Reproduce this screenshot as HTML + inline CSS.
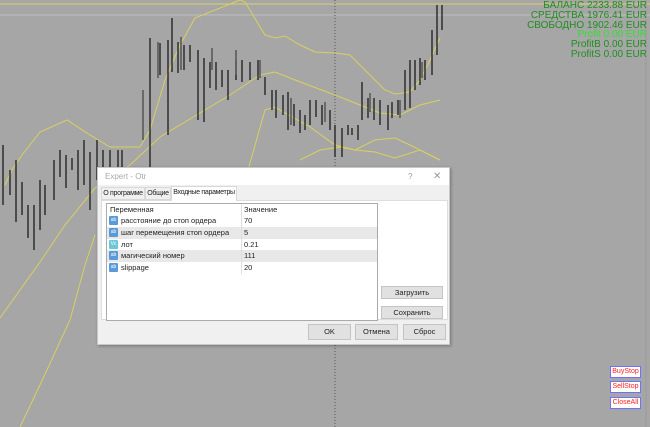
<!DOCTYPE html>
<html><head><meta charset="utf-8"><style>
*{margin:0;padding:0;box-sizing:border-box}
body{width:650px;height:427px;overflow:hidden;background:#a6a6a6;font-family:"Liberation Sans","DejaVu Sans",sans-serif;position:relative}
.info{position:absolute;right:3px;font-size:10px;line-height:10px;color:#1f8f1f;text-align:right;white-space:nowrap}
.btn{position:absolute;left:610px;width:31px;height:12px;background:#fff;border:1px solid #7070ff;color:#ff2020;font-size:7px;line-height:10px;text-align:center}
.dlg{position:absolute;left:97px;top:167px;width:353px;height:178px;background:#f0f0f0;border:1px solid #c8c8c8;box-shadow:1px 1px 3px rgba(0,0,0,.3);font-size:7.5px;color:#222}
.tb{position:absolute;left:0;top:0;width:100%;height:17px;background:#fff;color:#aaa;font-size:8px;line-height:17px;padding-left:7px}
.tab{position:absolute;top:19px;height:13px;line-height:12px;font-size:7px;letter-spacing:-0.3px;text-align:center;white-space:nowrap;overflow:hidden;border:1px solid #d8d8d8;background:#f0f0f0}
.page{position:absolute;left:3px;top:32px;width:347px;height:120px;background:#fff;border:1px solid #ddd}
.tbl{position:absolute;left:8px;top:35px;width:272px;height:118px;border:1px solid #aaa;background:#fff}
.row{position:absolute;left:0;width:270px;height:12px;line-height:12px;white-space:nowrap}
.row span{position:absolute}
.ic{position:absolute;left:2px;top:1px;width:9px;height:9px;background:#5a9ad8;border-radius:1px;font-size:5px;color:#fff;line-height:9px;text-align:center}
.b{position:absolute;height:13px;background:#e1e1e1;border:1px solid #c4c4c4;font-size:7.5px;line-height:11px;text-align:center;color:#222}
</style></head><body>
<svg width="650" height="427" style="position:absolute;left:0;top:0">
<line x1="0" y1="4" x2="650" y2="4" stroke="#d8d070" stroke-width="1"/>
<line x1="0" y1="15" x2="650" y2="15" stroke="#bdbdbd" stroke-width="1"/>
<line x1="335" y1="0" x2="335" y2="427" stroke="#555" stroke-width="1" stroke-dasharray="1,2"/>
<line x1="646" y1="0" x2="646" y2="427" stroke="#999" stroke-width="1"/>
<g fill="none" stroke="#d8d060" stroke-width="1">
<polyline points="5,185 12,170 22,155 40,132 67,120 90,135 110,147 140,147 150,130 165,80 180,45 195,18 240,0 245,2 265,35 275,38 285,36 300,45 315,52 335,53 350,55 365,70 385,90 395,94 410,92 420,80 430,60 440,38"/>
<polyline points="0,318 20,290 40,262 65,225 95,188 130,165 160,137 185,122 205,110 230,95 260,75 275,72 295,80 335,95 360,105 380,113 400,115 420,105 440,100"/>
<polyline points="20,427 40,385 70,320 85,265 95,235"/>
<polyline points="248,170 265,110 275,107 285,113 310,127 335,145 355,150 375,140 395,138 410,145 440,160"/>
<polyline points="300,160 320,150 340,147 355,150 375,152 395,158 420,150 440,160"/>
</g>
<g stroke="#111" stroke-width="1.2">
<path d="M3,145V205M10,170V195M16,160V222M22,182V215M28,205V238M34,205V250M40,180V230M45,185V215M54,160V200M60,150V177M66,155V188M72,158V170M78,150V190M84,140V185M90,152V210M97,140V180M103,150V167M110,150V185M118,150V175M122,150V170M150,38V170M160,43V75M168,40V135M172,18V72M178,42V73M184,45V70M190,45V62M198,50V120M204,58V122M210,62V88M216,62V90M222,70V87M228,70V100M236,60V80M242,60V82M250,62V80M258,60V80M265,77V95M272,90V110M276,90V118M283,95V115M288,92V130M294,104V126M300,110V133M305,115V130M310,100V125M316,100V117M322,105V125M330,110V130M335,125V157M342,128V157M348,125V135M352,128V135M358,125V140M362,82V120M368,98V118M374,98V120M380,100V125M388,105V130M392,102V118M398,100V115M405,70V110M410,60V108M415,60V90M420,58V85M425,60V80M432,30V75M437,5V55M442,5V30"/>
</g>
<g stroke="#555" stroke-width="1.5">
<path d="M143,90V140M158,42V78M181,37V70M212,48V70M236,50V75M260,60V78M291,98V125M325,102V122M370,93V112M400,100V118M422,62V78"/>
</g>
</svg>
<div class="info" style="top:1px">БАЛАНС 2233.88 EUR</div>
<div class="info" style="top:11px">СРЕДСТВА 1976.41 EUR</div>
<div class="info" style="top:21px">СВОБОДНО 1902.46 EUR</div>
<div class="info" style="top:30px;color:#30e030">Profit 0.00 EUR</div>
<div class="info" style="top:40px">ProfitB 0.00 EUR</div>
<div class="info" style="top:50px">ProfitS 0.00 EUR</div>
<div class="btn" style="top:366px">BuyStop</div>
<div class="btn" style="top:381px">SellStop</div>
<div class="btn" style="top:397px">CloseAll</div>
<div class="dlg">
<div class="tb">Expert - Otr<span style="position:absolute;left:310px;color:#999">?</span><span style="position:absolute;left:335px;color:#999;font-size:10px">✕</span></div>
<div class="tab" style="left:3px;width:44px">О программе</div>
<div class="tab" style="left:47px;width:26px">Общие</div>
<div class="page"></div>
<div class="tab" style="left:73px;top:18px;width:66px;height:15px;background:#fff;border-bottom:none">Входные параметры</div>
<div class="tbl">
<div class="row" style="top:0"><span style="left:3px">Переменная</span><span style="left:137px">Значение</span></div>
<div class="row" style="top:11px"><div class="ic">ab</div><span style="left:14px">расстояние до стоп ордера</span><span style="left:137px">70</span></div>
<div class="row" style="top:23px;background:#e8e8e8"><div class="ic">ab</div><span style="left:14px">шаг перемещения стоп ордера</span><span style="left:137px">5</span></div>
<div class="row" style="top:35px"><div class="ic" style="background:#6cc8d8">Vc</div><span style="left:14px">лот</span><span style="left:137px">0.21</span></div>
<div class="row" style="top:46px;background:#e8e8e8"><div class="ic">ab</div><span style="left:14px">магический номер</span><span style="left:137px">111</span></div>
<div class="row" style="top:58px"><div class="ic">ab</div><span style="left:14px">slippage</span><span style="left:137px">20</span></div>
<div style="position:absolute;left:134px;top:0;width:1px;height:70px;background:#ddd"></div>
</div>
<div class="b" style="left:283px;top:118px;width:62px">Загрузить</div>
<div class="b" style="left:283px;top:138px;width:62px">Сохранить</div>
<div class="b" style="left:210px;top:156px;width:43px;height:16px;line-height:14px">OK</div>
<div class="b" style="left:257px;top:156px;width:43px;height:16px;line-height:14px">Отмена</div>
<div class="b" style="left:305px;top:156px;width:43px;height:16px;line-height:14px">Сброс</div>
</div>
</body></html>
